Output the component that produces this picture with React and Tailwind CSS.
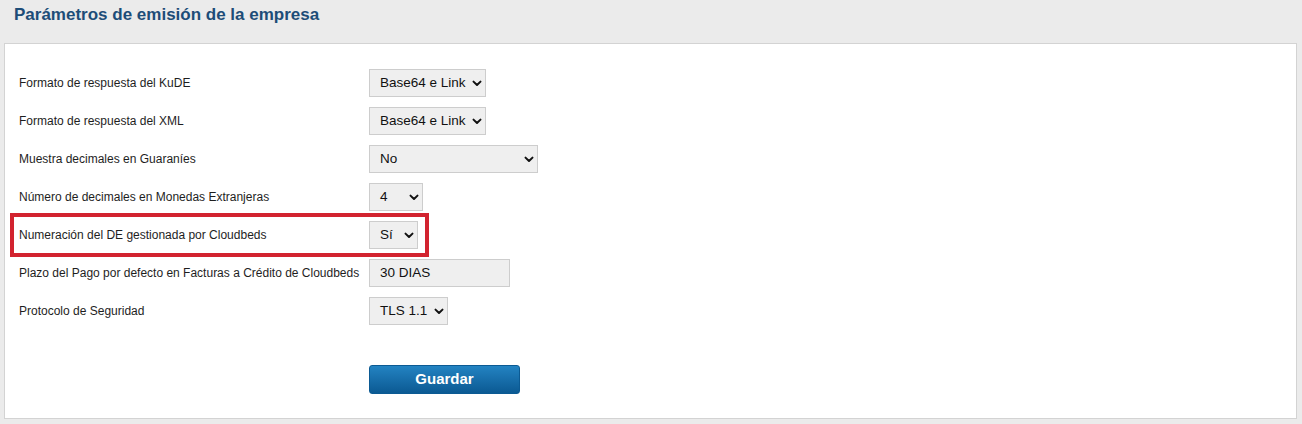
import React from "react";

function Chevron() {
  return (
    <svg width="10" height="7" viewBox="0 0 10 7" className="shrink-0">
      <polyline points="1.5,1.6 5,5 8.5,1.6" fill="none" stroke="#111" strokeWidth="2" strokeLinecap="round" strokeLinejoin="round" />
    </svg>
  );
}

function Select({ value, w }) {
  return (
    <div
      className={`h-[28px] ${w} flex items-center justify-between pl-[10px] pr-[3px] bg-[#efefef] border border-[#cdcdcd] text-[13.5px] text-[#111]`}
    >
      <span>{value}</span>
      <Chevron />
    </div>
  );
}

function Row({ label, children, highlight }) {
  return (
    <div className="relative flex items-center h-[28px]">
      <div className="w-[350px] text-[12px] text-[#1e1e1e]">{label}</div>
      {children}
      {highlight && (
        <div className="absolute left-[-9px] top-[-8px] w-[419px] h-[44px] border-[4px] border-[#d2232f] pointer-events-none" />
      )}
    </div>
  );
}

export default function App() {
  return (
    <div
      className="w-[1302px] h-[424px] bg-[#ebebeb] pl-[4px] pr-[5px]"
      style={{ fontFamily: '"Liberation Sans", Arial, sans-serif' }}
    >
      <div className="h-[43px] pt-[3px] pl-[10px]">
        <h1 className="text-[17px] leading-[24px] font-bold text-[#1d4d78]">
          Parámetros de emisión de la empresa
        </h1>
      </div>
      <div className="bg-white border border-[#d3d3d3] h-[376px] pt-[25px] pl-[14px]">
        <div className="flex flex-col gap-[10px]">
          <Row label="Formato de respuesta del KuDE">
            <Select value="Base64 e Link" w="w-[117px]" />
          </Row>
          <Row label="Formato de respuesta del XML">
            <Select value="Base64 e Link" w="w-[117px]" />
          </Row>
          <Row label="Muestra decimales en Guaraníes">
            <Select value="No" w="w-[169px]" />
          </Row>
          <Row label="Número de decimales en Monedas Extranjeras">
            <Select value="4" w="w-[54px]" />
          </Row>
          <Row label="Numeración del DE gestionada por Cloudbeds" highlight>
            <Select value="Sí" w="w-[49px]" />
          </Row>
          <Row label="Plazo del Pago por defecto en Facturas a Crédito de Cloudbeds">
            <div className="h-[28px] w-[141px] flex items-center pl-[10px] bg-[#efefef] border border-[#cdcdcd] text-[13.5px] text-[#111]">
              30 DIAS
            </div>
          </Row>
          <Row label="Protocolo de Seguridad">
            <Select value="TLS 1.1" w="w-[79px]" />
          </Row>
        </div>
        <div className="pl-[350px] mt-[40px]">
          <button className="w-[151px] h-[29px] rounded-[3px] bg-gradient-to-b from-[#2383c2] to-[#0b5a93] text-white font-bold text-[15px] border border-[#0b5a93]">
            Guardar
          </button>
        </div>
      </div>
    </div>
  );
}
